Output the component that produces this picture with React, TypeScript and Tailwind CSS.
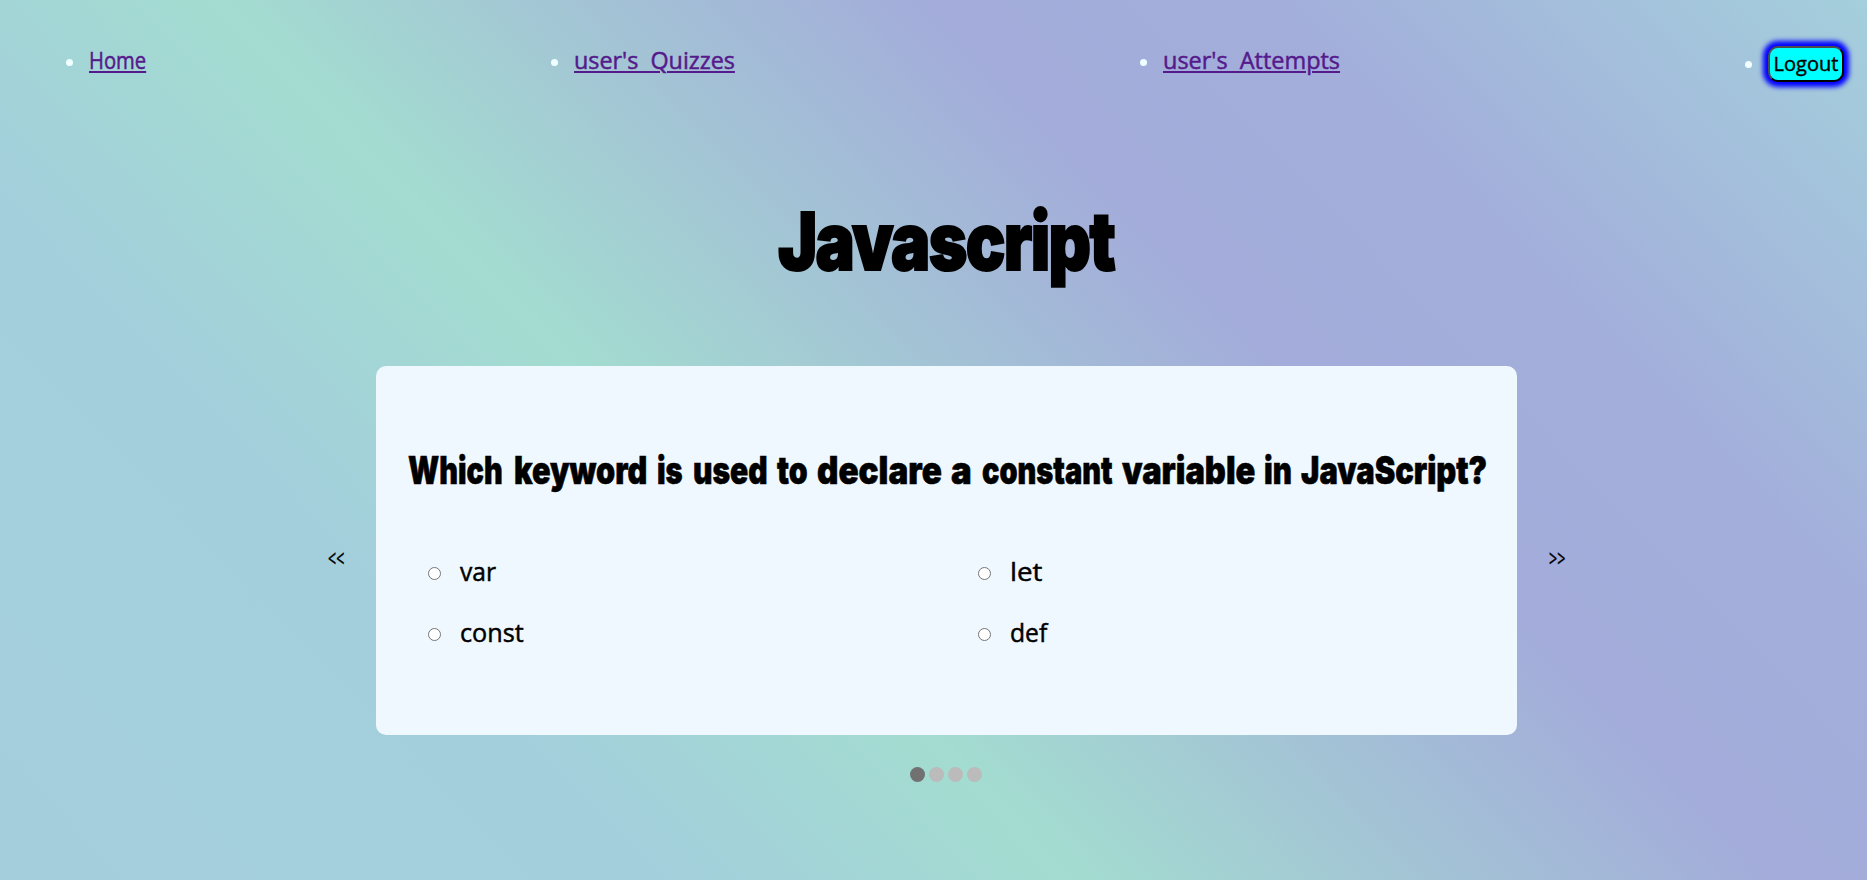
import React, { useLayoutEffect, useRef, useState } from "react";

const links = [
  { label: "Home", width: 57 },
  { label: "user's  Quizzes", width: 161 },
  { label: "user's  Attempts", width: 177 },
];

const options = [
  { label: "var", width: 36 },
  { label: "let", width: 32 },
  { label: "const", width: 64 },
  { label: "def", width: 37 },
];

/* Each word of the question with its width and the gap before it. */
const question = [
  { text: "Which", width: 95, gap: 0 },
  { text: "keyword", width: 133, gap: 11 },
  { text: "is", width: 26, gap: 10 },
  { text: "used", width: 75, gap: 10 },
  { text: "to", width: 31, gap: 9 },
  { text: "declare", width: 125, gap: 9 },
  { text: "a", width: 21, gap: 9 },
  { text: "constant", width: 131, gap: 10 },
  { text: "variable", width: 133, gap: 9 },
  { text: "in", width: 28, gap: 9 },
  { text: "JavaScript?", width: 186, gap: 9 },
];

/* Condenses or widens a run of text so that it fills the given width. */
function Fit({ text, width, gap = 0, className = "" }: { text: string; width: number; gap?: number; className?: string }) {
  const ref = useRef<HTMLSpanElement>(null);
  const [scale, setScale] = useState(1);
  useLayoutEffect(() => {
    if (ref.current) setScale(width / ref.current.offsetWidth);
  }, [width, text]);
  return (
    <span className="inline-block shrink-0" style={{ width, marginLeft: gap }}>
      <span
        ref={ref}
        className={`inline-block w-max origin-left whitespace-pre ${className}`}
        style={{ transform: `scaleX(${scale})` }}
      >
        {text}
      </span>
    </span>
  );
}

function Bullet() {
  return <span className="-ml-[23px] mr-4 size-[7px] shrink-0 rounded-full bg-[azure]" />;
}

function Nav() {
  return (
    <nav>
      <ul className="flex items-start justify-between pl-[89px] pr-[23px] pt-[46px]">
        {links.map((l) => (
          <li key={l.label} className="flex h-[33px] items-center">
            <Bullet />
            <a
              href="#"
              className="-mt-[5px] flex text-[24.5px] leading-[30px] text-[#551a8b] [-webkit-text-stroke:0.5px_#551a8b]"
            >
              <Fit
                text={l.label}
                width={l.width}
                className="underline decoration-2 underline-offset-2"
              />
            </a>
          </li>
        ))}
        <li className="flex h-9 items-center">
          <Bullet />
          <button className="flex h-9 w-[76px] items-center justify-center rounded-[10px] border-2 border-b-black border-l-[#4c4c4c] border-r-black border-t-[#4c4c4c] bg-[aqua] text-[20px] leading-none text-black shadow-[0_0_5px_5px_blue] [-webkit-text-stroke:0.4px_black]">
            <Fit text="Logout" width={65} />
          </button>
        </li>
      </ul>
    </nav>
  );
}

function Question() {
  return (
    <section className="h-[369px] w-[1141px] rounded-[10px] bg-[aliceblue] px-8 pt-[82px]">
      <h2 className="flex h-[44px] items-center font-[Inter] text-[38px] font-black leading-none [-webkit-text-stroke:0.6px_black]">
        {question.map((w) => (
          <Fit key={w.text} text={w.text} width={w.width} gap={w.gap} />
        ))}
      </h2>
      <div className="mt-[65px] grid grid-cols-[550px_1fr] gap-y-[29px] pl-5">
        {options.map((o) => (
          <label key={o.label} className="flex h-8 items-center">
            <input
              type="radio"
              name="answer"
              className="mr-[19px] size-[13px] appearance-none rounded-full border border-[#767676] bg-white"
            />
            <span className="-mt-1 flex text-[26px] leading-8 [-webkit-text-stroke:0.5px_black]">
              <Fit text={o.label} width={o.width} />
            </span>
          </label>
        ))}
      </div>
    </section>
  );
}

export default function App() {
  return (
    <div className="h-[880px] w-full overflow-hidden bg-[linear-gradient(46deg,#a4cedc_0%,#a3cfdc_24.3%,#a3dcd0_39.4%,#a3acda_65.4%,#a3aedb_78%,#a4cfdc_100%)] font-['Open_Sans',sans-serif] text-black">
      <Nav />
      <main className="flex flex-col items-center pl-[25px]">
        <h1 className="mt-[109px] flex h-[100px] font-[Inter] text-[80px] font-black leading-[100px] tracking-[-2px] [-webkit-text-stroke:2px_black]">
          <Fit text="Javascript" width={336} />
        </h1>
        <div className="mt-[75px] flex items-center gap-8">
          <button className="mt-3.5 w-4 text-[24px] [-webkit-text-stroke:0.4px_black]">
            <Fit text="<<" width={16} />
          </button>
          <Question />
          <button className="mt-3.5 w-4 text-[24px] [-webkit-text-stroke:0.4px_black]">
            <Fit text=">>" width={16} />
          </button>
        </div>
        <div className="mt-8 flex gap-1">
          <span className="size-[15px] rounded-full bg-[#717171]" />
          <span className="size-[15px] rounded-full bg-[#bbb]" />
          <span className="size-[15px] rounded-full bg-[#bbb]" />
          <span className="size-[15px] rounded-full bg-[#bbb]" />
        </div>
      </main>
    </div>
  );
}
